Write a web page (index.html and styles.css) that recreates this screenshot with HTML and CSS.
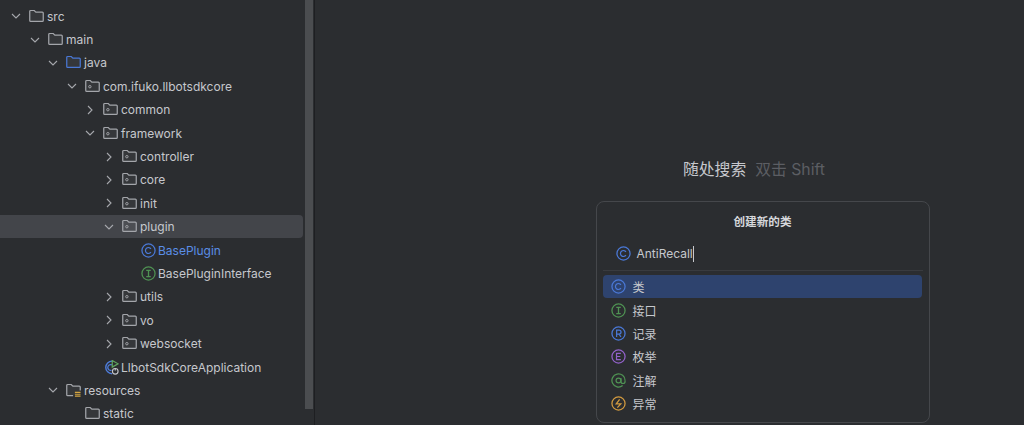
FILE: index.html
```html
<!DOCTYPE html>
<html lang="en">
<head>
    <meta charset="UTF-8">
    <title>Project</title>
    <link rel="stylesheet" href="styles.css">
</head>
<body>
    <svg class="defs">
        <symbol id="folder" viewBox="0 0 16 16">
            <path d="M.8 2.6a1 1 0 0 1 1-1h3.8l1.7 1.8h6.9a1 1 0 0 1 1 1v7.9a1 1 0 0 1-1 1H1.8a1 1 0 0 1-1-1z" fill="#ffffff" fill-opacity=".05" stroke="currentColor" stroke-width="1.3"/>
        </symbol>
        <symbol id="package" viewBox="0 0 16 16">
            <path d="M.8 2.6a1 1 0 0 1 1-1h3.8l1.7 1.8h6.9a1 1 0 0 1 1 1v7.9a1 1 0 0 1-1 1H1.8a1 1 0 0 1-1-1z" fill="#ffffff" fill-opacity=".05" stroke="currentColor" stroke-width="1.3"/>
            <circle cx="5.2" cy="8.2" r="1.3" fill="none" stroke="currentColor"/>
        </symbol>
        <symbol id="open" viewBox="0 0 10 10">
            <path d="M1 3l4 4 4-4" fill="none" stroke="currentColor" stroke-width="1.1"/>
        </symbol>
        <symbol id="closed" viewBox="0 0 10 10">
            <path d="M3 1l4 4-4 4" fill="none" stroke="currentColor" stroke-width="1.1"/>
        </symbol>
        <symbol id="c-mark" viewBox="0 0 16 16">
            <circle cx="8" cy="8" r="7" fill="none" stroke="currentColor" stroke-width="1.35"/>
            <path d="M10.6 6.2A3.2 3.2 0 1 0 10.6 9.8" fill="none" stroke="currentColor" stroke-width="1.3"/>
        </symbol>
        <symbol id="i-mark" viewBox="0 0 16 16">
            <circle cx="8" cy="8" r="7" fill="none" stroke="currentColor" stroke-width="1.35"/>
            <path d="M5.6 4.6h4.8M5.6 11.4h4.8M8 4.6v6.8" fill="none" stroke="currentColor" stroke-width="1.4"/>
        </symbol>
        <symbol id="r-mark" viewBox="0 0 16 16">
            <circle cx="8" cy="8" r="7" fill="none" stroke="currentColor" stroke-width="1.35"/>
            <path d="M6 11.7V4.4h2.6a2.1 2.1 0 0 1 0 4.2H6M8.6 8.6l2 3.1" fill="none" stroke="currentColor" stroke-width="1.3"/>
        </symbol>
        <symbol id="e-mark" viewBox="0 0 16 16">
            <circle cx="8" cy="8" r="7" fill="none" stroke="currentColor" stroke-width="1.35"/>
            <path d="M10.5 4.6H5.9v6.8h4.6M5.9 8h4" fill="none" stroke="currentColor" stroke-width="1.3"/>
        </symbol>
        <symbol id="at-mark" viewBox="0 0 16 16">
            <path d="M15 8a7 7 0 1 0-2.6 5.4" fill="none" stroke="currentColor" stroke-width="1.35"/>
            <circle cx="8" cy="8" r="2.6" fill="none" stroke="currentColor" stroke-width="1.3"/>
            <path d="M10.6 5.4V9a2.2 2.2 0 0 0 4.4 0V8" fill="none" stroke="currentColor" stroke-width="1.3"/>
        </symbol>
        <symbol id="bolt-mark" viewBox="0 0 16 16">
            <circle cx="8" cy="8" r="7" fill="none" stroke="currentColor" stroke-width="1.35"/>
            <path d="M9.2 3.6L5.6 8.4h4.8L6.8 12.4" fill="none" stroke="currentColor" stroke-width="1.4"/>
        </symbol>
    </svg>

    <div class="window">
        <aside class="tree">
            <ul class="rows">
                <li class="row lvl-0"><svg class="arrow"><use href="#open"/></svg><svg class="icon"><use href="#folder"/></svg><span>src</span></li>
                <li class="row lvl-1"><svg class="arrow"><use href="#open"/></svg><svg class="icon"><use href="#folder"/></svg><span>main</span></li>
                <li class="row lvl-2"><svg class="arrow"><use href="#open"/></svg><svg class="icon blue"><use href="#folder"/></svg><span>java</span></li>
                <li class="row lvl-3"><svg class="arrow"><use href="#open"/></svg><svg class="icon"><use href="#package"/></svg><span>com.ifuko.llbotsdkcore</span></li>
                <li class="row lvl-4"><svg class="arrow"><use href="#closed"/></svg><svg class="icon"><use href="#package"/></svg><span>common</span></li>
                <li class="row lvl-4"><svg class="arrow"><use href="#open"/></svg><svg class="icon"><use href="#package"/></svg><span>framework</span></li>
                <li class="row lvl-5"><svg class="arrow"><use href="#closed"/></svg><svg class="icon"><use href="#package"/></svg><span>controller</span></li>
                <li class="row lvl-5"><svg class="arrow"><use href="#closed"/></svg><svg class="icon"><use href="#package"/></svg><span>core</span></li>
                <li class="row lvl-5"><svg class="arrow"><use href="#closed"/></svg><svg class="icon"><use href="#package"/></svg><span>init</span></li>
                <li class="row lvl-5 selected"><svg class="arrow"><use href="#open"/></svg><svg class="icon"><use href="#package"/></svg><span>plugin</span></li>
                <li class="row lvl-6"><svg class="icon blue"><use href="#c-mark"/></svg><span class="link">BasePlugin</span></li>
                <li class="row lvl-6"><svg class="icon green"><use href="#i-mark"/></svg><span>BasePluginInterface</span></li>
                <li class="row lvl-5"><svg class="arrow"><use href="#closed"/></svg><svg class="icon"><use href="#package"/></svg><span>utils</span></li>
                <li class="row lvl-5"><svg class="arrow"><use href="#closed"/></svg><svg class="icon"><use href="#package"/></svg><span>vo</span></li>
                <li class="row lvl-5"><svg class="arrow"><use href="#closed"/></svg><svg class="icon"><use href="#package"/></svg><span>websocket</span></li>
                <li class="row lvl-app">
                    <svg class="icon" viewBox="0 0 16 16">
                        <path d="M8.6 1.2A6.6 6.6 0 1 0 8.6 14.6" fill="none" stroke="#4e7ddb" stroke-width="1.5"/>
                        <path d="M8.4 5.2A3.1 3.1 0 1 0 8 11" fill="none" stroke="#4e7ddb" stroke-width="1.4"/>
                        <path d="M8.8 .6l6.2 3.5-6.2 3.5z" fill="none" stroke="#5fa55f" stroke-width="1.3"/>
                        <circle cx="12" cy="12" r="3" fill="#2b2d30" stroke="#c4c6cb" stroke-width="1.2"/>
                        <path d="M12 8.4v2.8" stroke="#c4c6cb" stroke-width="1.2"/>
                    </svg><span>LlbotSdkCoreApplication</span>
                </li>
                <li class="row lvl-2"><svg class="arrow"><use href="#open"/></svg>
                    <svg class="icon" viewBox="0 0 16 16">
                        <path d="M7.6 13.4H1.8a1 1 0 0 1-1-1V2.6a1 1 0 0 1 1-1h3.8l1.7 1.8h6.9a1 1 0 0 1 1 1V8" fill="#ffffff" fill-opacity=".05" stroke="currentColor" stroke-width="1.3"/>
                        <path d="M9.5 10h6M9.5 12h6M9.5 14h6" stroke="#d5a642" stroke-width="1.2"/>
                    </svg><span>resources</span>
                </li>
                <li class="row lvl-3 no-arrow"><svg class="icon"><use href="#folder"/></svg><span>static</span></li>
            </ul>
            <div class="scrollbar"></div>
        </aside>

        <main class="editor">
            <p class="hint">随处搜索<span class="keys">双击 Shift</span></p>
            <section class="popup">
                <h2 class="popup-title">创建新的类</h2>
                <div class="name-field">
                    <svg class="icon blue"><use href="#c-mark"/></svg>
                    <span>AntiRecall</span><i class="caret"></i>
                </div>
                <ul class="kinds">
                    <li class="kind active"><svg class="icon blue"><use href="#c-mark"/></svg>类</li>
                    <li class="kind"><svg class="icon green"><use href="#i-mark"/></svg>接口</li>
                    <li class="kind"><svg class="icon blue"><use href="#r-mark"/></svg>记录</li>
                    <li class="kind"><svg class="icon purple"><use href="#e-mark"/></svg>枚举</li>
                    <li class="kind"><svg class="icon green"><use href="#at-mark"/></svg>注解</li>
                    <li class="kind"><svg class="icon orange"><use href="#bolt-mark"/></svg>异常</li>
                </ul>
            </section>
        </main>
    </div>
</body>
</html>
```

FILE: styles.css
```css
:root {
    --bg-color: #2b2d30;
    --text-color: #c6c8cd;
    --muted-color: #5c5e63;
    --border-color: #45474b;
    --blue: #4a78d6;
    --green: #4f9253;
    --purple: #9262c9;
    --orange: #d29a3f;
}

* {
    margin: 0;
    padding: 0;
    box-sizing: border-box;
}

body {
    width: 1024px;
    height: 425px;
    overflow: hidden;
    background-color: var(--bg-color);
    color: var(--text-color);
    font-family: "Inter", "Noto Sans CJK SC", sans-serif;
    font-size: 12px;
}

ul {
    list-style: none;
}

.defs {
    display: none;
}

.window {
    display: flex;
    height: 425px;
}

.tree {
    width: 315px;
    flex-shrink: 0;
    display: flex;
    overflow: hidden;
    border-right: 1px solid #1e1f22;
}

.rows {
    width: 303px;
    flex-shrink: 0;
    padding-top: 4.5px;
}

.scrollbar {
    width: 8px;
    margin-left: 2px;
    height: 409px;
    background-color: #4b4d50;
}

.row {
    height: 23.4px;
    display: flex;
    align-items: center;
    white-space: nowrap;
}

.row span {
    margin-left: 3px;
}

.lvl-6 span,
.lvl-app span {
    margin-left: 2px;
}

.selected {
    background-color: #43454a;
    border-radius: 0 4px 4px 0;
}

.link {
    color: #5a8de6;
}

.arrow {
    width: 10px;
    height: 10px;
    margin-right: 8px;
    color: #a6a8ad;
    flex-shrink: 0;
}

.icon {
    width: 15px;
    height: 15px;
    flex-shrink: 0;
    color: #a4a6ab;
}

.icon.blue { color: var(--blue); }
.icon.green { color: var(--green); }
.icon.purple { color: var(--purple); }
.icon.orange { color: var(--orange); }

.lvl-0 { padding-left: 11px; }
.lvl-1 { padding-left: 30px; }
.lvl-2 { padding-left: 48px; }
.lvl-3 { padding-left: 67px; }
.lvl-4 { padding-left: 85px; }
.lvl-5 { padding-left: 104px; }
.lvl-6 { padding-left: 141px; }
.lvl-app { padding-left: 104px; }
.lvl-3.no-arrow { padding-left: 85px; }

/* left padding pulls the centre of the content right of the middle, the real window is wider */
.editor {
    flex: 1;
    min-width: 0;
    display: flex;
    flex-direction: column;
    align-items: center;
    padding-top: 159px;
    padding-left: 186px;
}

.hint {
    height: 22px;
    font-size: 15.8px;
    line-height: 22px;
    margin-right: 17px;
}

.keys {
    color: var(--muted-color);
    margin-left: 9px;
}

.popup {
    width: 334px;
    height: 222px;
    margin-top: 20px;
    border: 1px solid var(--border-color);
    border-radius: 8px;
    padding: 0 6px;
}

.popup-title {
    font-size: 11.6px;
    font-weight: 700;
    text-align: center;
    color: #d6d8dc;
    margin-top: 12px;
    line-height: 16px;
}

.name-field {
    height: 32px;
    margin-top: 9px;
    padding-left: 13px;
    padding-bottom: 2px;
    display: flex;
    align-items: center;
    gap: 6px;
    border-bottom: 1px solid #393b3f;
}

.caret {
    width: 1px;
    height: 16px;
    margin-left: -6px;
    background-color: #c6c8cd;
}

.kinds {
    margin-top: 4px;
}

.kind {
    height: 23.4px;
    display: flex;
    align-items: center;
    gap: 7px;
    padding-left: 8px;
    font-size: 12px;
}

.kind.active {
    background-color: #2e436e;
    border-radius: 4px;
    width: 319px;
}
```
